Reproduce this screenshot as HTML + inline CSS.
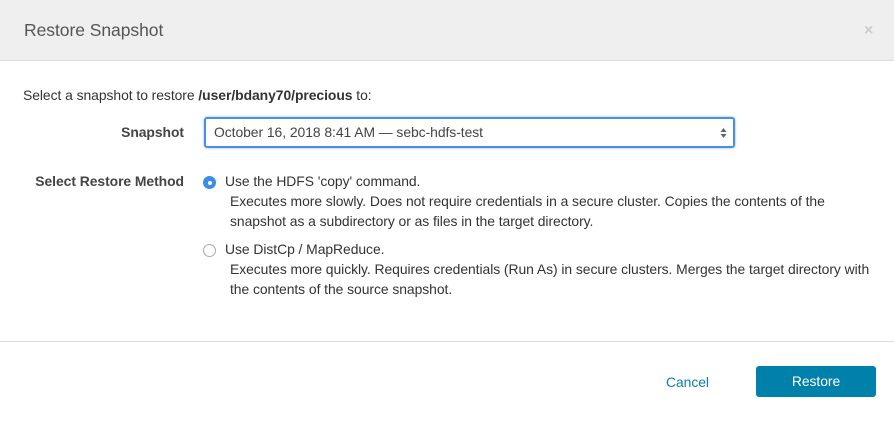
<!DOCTYPE html>
<html><head><meta charset="utf-8"><style>
*{margin:0;padding:0;box-sizing:border-box}
body{width:894px;height:422px;background:#fff;font-family:"Liberation Sans",sans-serif;color:#333;font-size:13.9px;letter-spacing:-0.05px;position:relative;overflow:hidden}
.hdr{position:absolute;left:0;top:0;width:894px;height:61px;background:#f0eff0;border-bottom:1px solid #ddd}
.hdr h1{position:absolute;left:24px;top:20px;font-size:17.5px;font-weight:normal;color:#555}
.x{position:absolute;left:864px;top:22px;font-size:16px;color:#ccc;font-weight:bold}
.a{position:absolute;white-space:nowrap}
.r{position:absolute;white-space:nowrap;text-align:right;right:710px;font-weight:bold;color:#444}
.sel{position:absolute;left:204px;top:117px;width:531px;height:31px;border:2px solid #4a90e2;border-radius:3px;box-shadow:0 0 2px #7ab0f0}
.sel span{position:absolute;left:8px;top:5px;color:#444}
.radio{position:absolute;width:13px;height:13px;border-radius:50%}
.foot{position:absolute;left:0;top:341px;width:894px;border-top:1px solid #ddd}
.btn{position:absolute;left:756px;top:366px;width:120px;height:31px;background:#0081ab;border-radius:3px;color:#fff;text-align:center;line-height:31px}
</style></head><body>
<div class="hdr"><h1>Restore Snapshot</h1><div class="x">×</div></div>
<div class="a" style="left:23px;top:87px">Select a snapshot to restore <b>/user/bdany70/precious</b> to:</div>
<div class="r" style="top:124px">Snapshot</div>
<div class="sel"><span>October 16, 2018 8:41 AM — sebc-hdfs-test</span>
<svg style="position:absolute;right:6px;top:8px" width="7" height="12"><path d="M0.5 5L3.5 1L6.5 5Z M0.5 7L3.5 11L6.5 7Z" fill="#666"/></svg></div>
<div class="r" style="top:173px">Select Restore Method</div>
<div class="radio" style="left:203px;top:176px;background:#3b8de6"><div style="position:absolute;left:4.5px;top:4.5px;width:4px;height:4px;border-radius:50%;background:#fff"></div></div>
<div class="a" style="left:225px;top:173px">Use the HDFS 'copy' command.</div>
<div class="a" style="left:230px;top:191px;line-height:20px">Executes more slowly. Does not require credentials in a secure cluster. Copies the contents of the<br>snapshot as a subdirectory or as files in the target directory.</div>
<div class="radio" style="left:203px;top:244px;border:1px solid #aaa;background:#fff"></div>
<div class="a" style="left:225px;top:241px">Use DistCp / MapReduce.</div>
<div class="a" style="left:230px;top:259px;line-height:20px">Executes more quickly. Requires credentials (Run As) in secure clusters. Merges the target directory with<br>the contents of the source snapshot.</div>
<div class="foot"></div>
<div class="a" style="left:666px;top:374px;color:#0a7db0">Cancel</div>
<div class="btn">Restore</div>
</body></html>
